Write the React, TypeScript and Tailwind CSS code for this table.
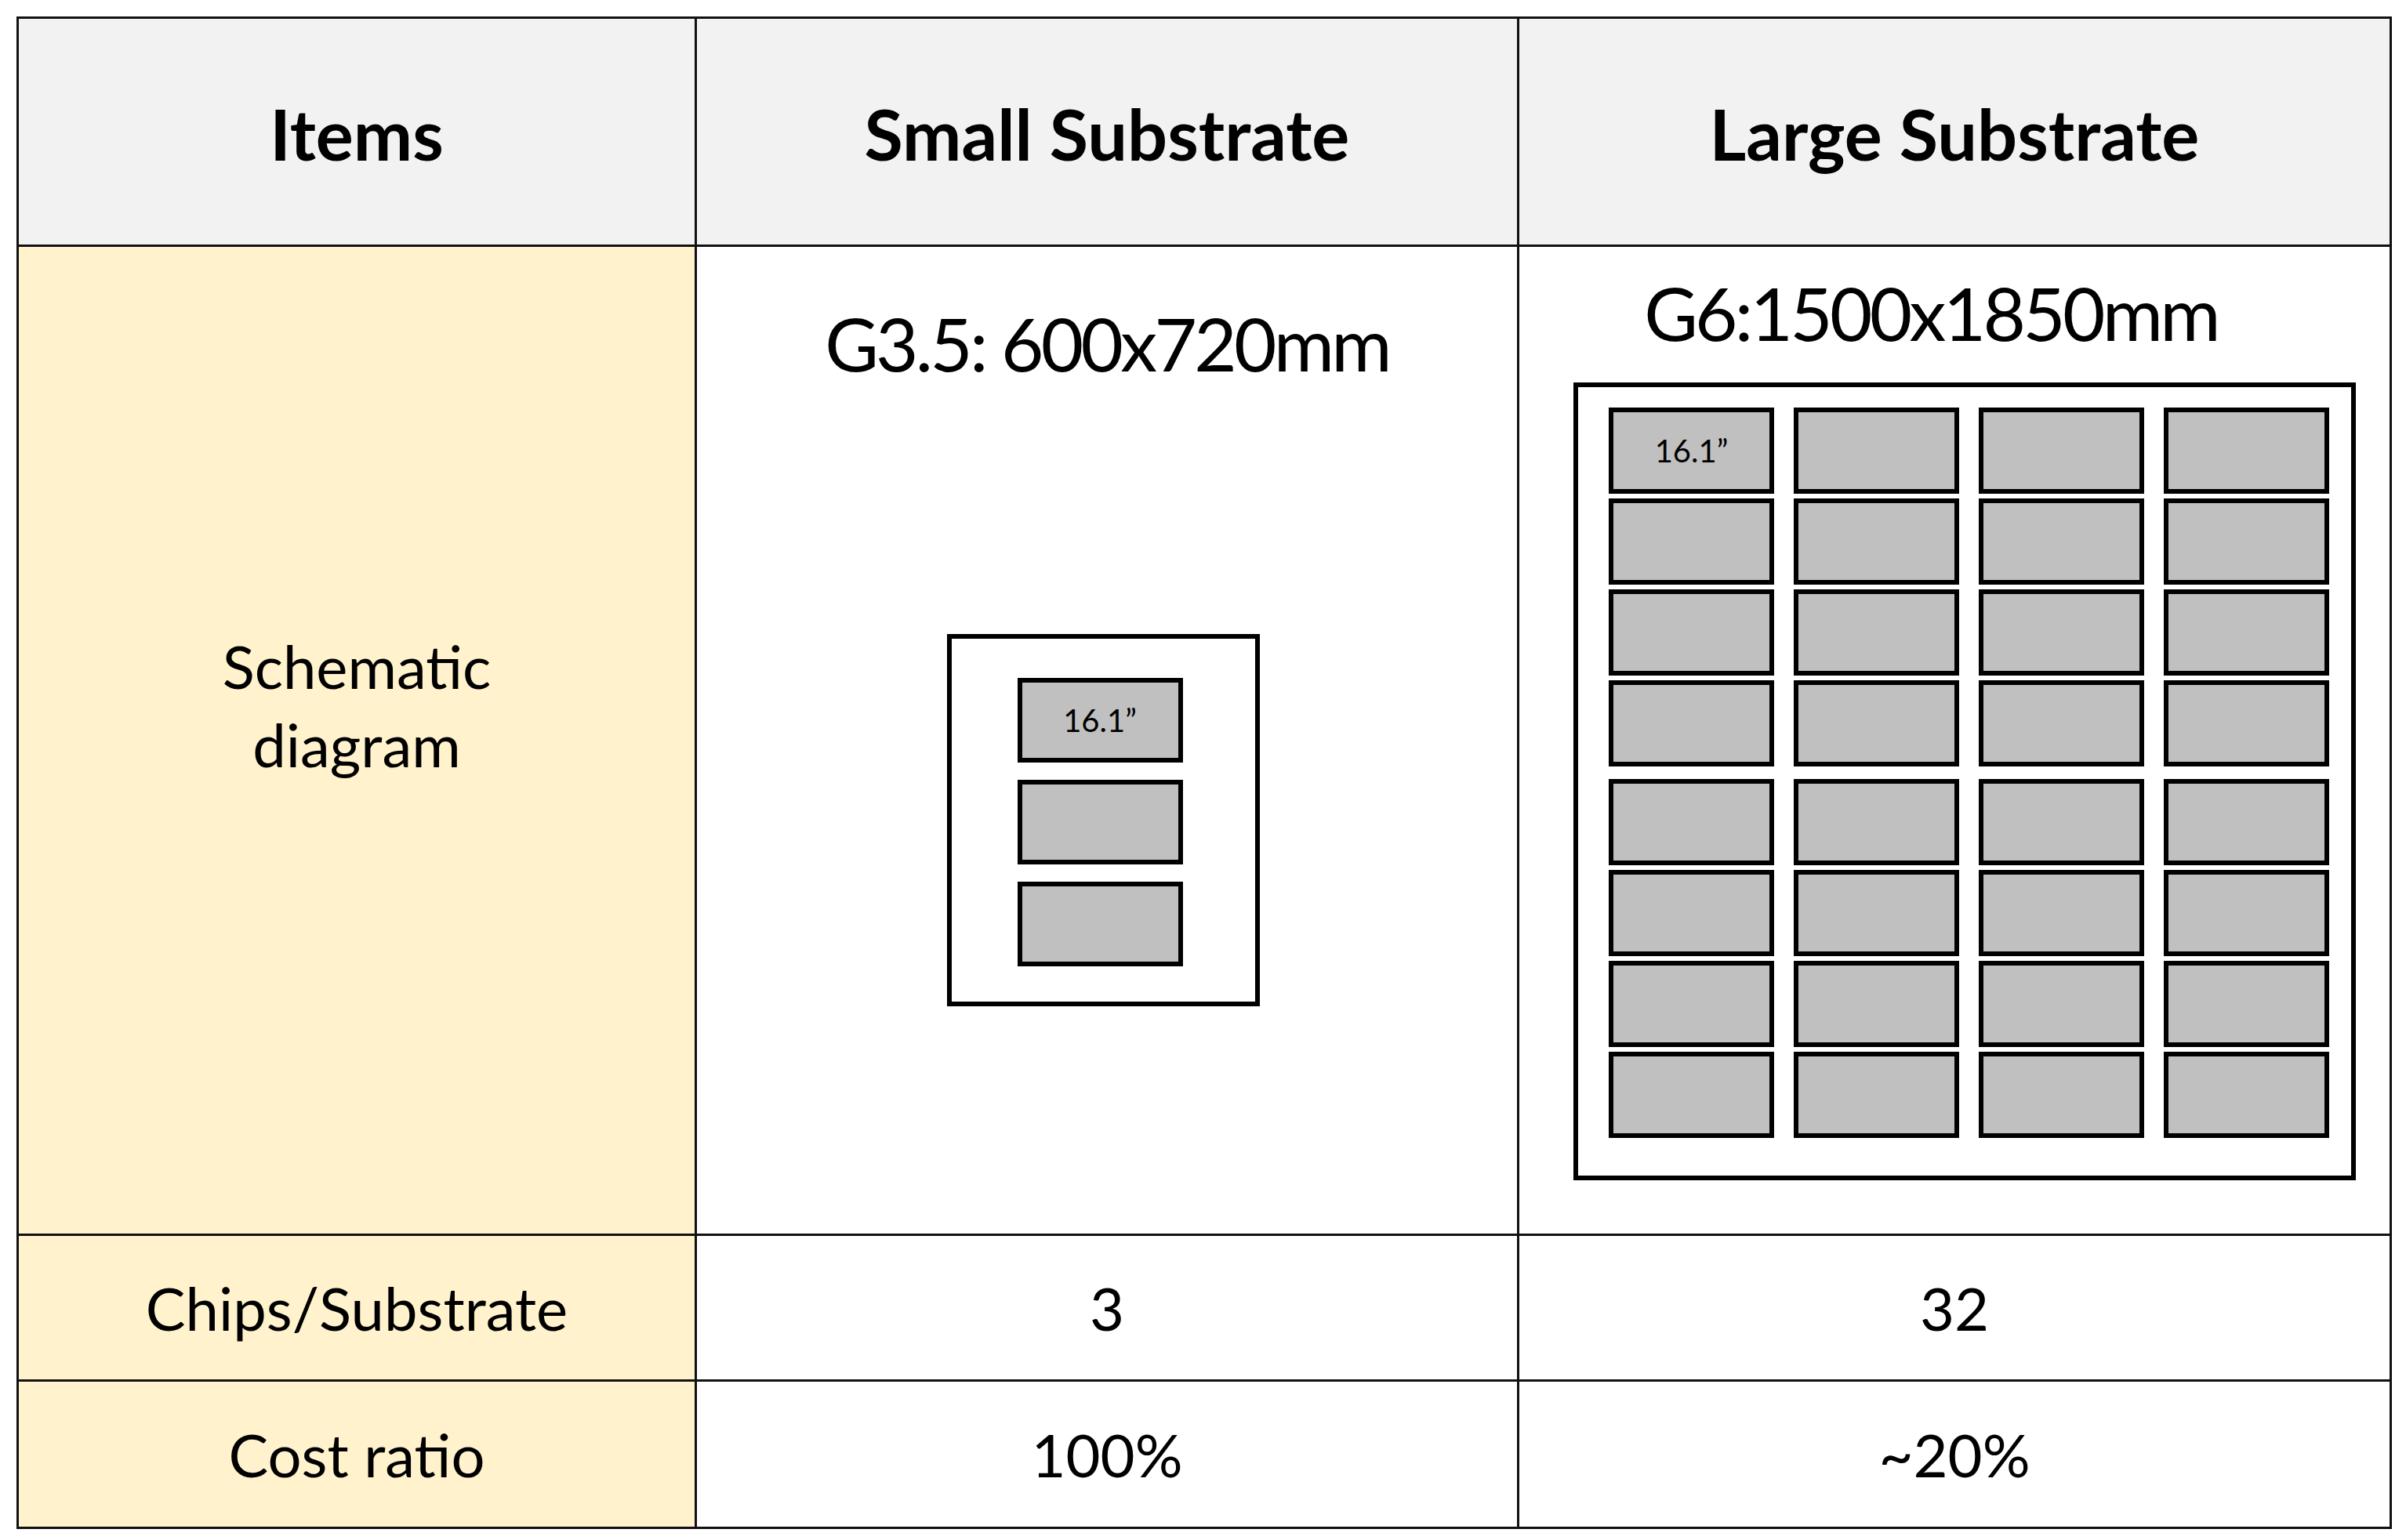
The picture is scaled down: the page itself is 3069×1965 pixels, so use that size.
const chipRows = [0, 1, 2, 3]
const chipCols = [0, 1, 2, 3]

function Chip({ label }: { label?: string }) {
  return (
    <div className="flex h-[110px] w-[211px] items-center justify-center border-[6px] border-black bg-[#c0c0c0] text-[40px] leading-none text-black">
      {label}
    </div>
  )
}

function SmallChip({ label }: { label?: string }) {
  return (
    <div className="flex h-[108px] w-[211px] items-center justify-center border-[6px] border-black bg-[#c0c0c0] text-[40px] leading-none text-black">
      {label}
    </div>
  )
}

function ChipBlock({ first }: { first: boolean }) {
  return (
    <div className="grid grid-cols-[211px_211px_211px_211px] gap-x-[25px] gap-y-[6px]">
      {chipRows.map((r) =>
        chipCols.map((c) => (
          <Chip key={`${r}-${c}`} label={first && r === 0 && c === 0 ? '16.1”' : undefined} />
        ))
      )}
    </div>
  )
}

export default function App() {
  const cell = 'border-r-[3px] border-b-[3px] border-[#111]'
  const label = `${cell} flex items-center justify-center bg-[#fff2cc] text-center text-[76px] leading-[100px]`
  const value = `${cell} flex items-center justify-center bg-white text-[76px] leading-none`
  const head = `${cell} flex items-center justify-center bg-[#f2f2f2] pt-[4px] text-[90px] font-bold leading-none`

  return (
    <div className="min-h-screen bg-white pl-[21px] pt-[21px] text-black" style={{ fontFamily: 'Lato, "Noto Sans", sans-serif' }}>
      <div className="grid w-max grid-cols-[865px_1049px_1113px] grid-rows-[291px_1262px_186px_188px] border-l-[3px] border-t-[3px] border-[#111]">
        {/* header */}
        <div className={head}>Items</div>
        <div className={head}>Small Substrate</div>
        <div className={head}>Large Substrate</div>

        {/* schematic row */}
        <div className={`${label} pb-[90px]`}>
          <div>
            Schematic
            <br />
            diagram
          </div>
        </div>

        <div className={`${cell} flex flex-col items-center bg-white pt-[76px]`}>
          <div className="text-[94px] leading-none tracking-[-0.04em]">G3.5: 600x720mm</div>
          <div className="mr-[10px] mt-[324px] flex h-[475px] w-[399px] flex-col gap-[22px] border-[6px] border-black pl-[84px] pt-[50px]">
            <SmallChip label="16.1”" />
            <SmallChip />
            <SmallChip />
          </div>
        </div>

        <div className={`${cell} flex flex-col items-center bg-white pt-[37px]`}>
          <div className="pr-[60px] text-[94px] leading-none tracking-[-0.04em]">G6:1500x1850mm</div>
          <div className="ml-[26px] mt-[42px] flex h-[1018px] w-[998px] flex-col gap-[16px] border-[6px] border-black pl-[39px] pt-[26px]">
            <ChipBlock first />
            <ChipBlock first={false} />
          </div>
        </div>

        {/* chips per substrate */}
        <div className={label}>Chips/Substrate</div>
        <div className={value}>3</div>
        <div className={value}>32</div>

        {/* cost */}
        <div className={label}>Cost ratio</div>
        <div className={value}>100%</div>
        <div className={value}>~20%</div>
      </div>
    </div>
  )
}
